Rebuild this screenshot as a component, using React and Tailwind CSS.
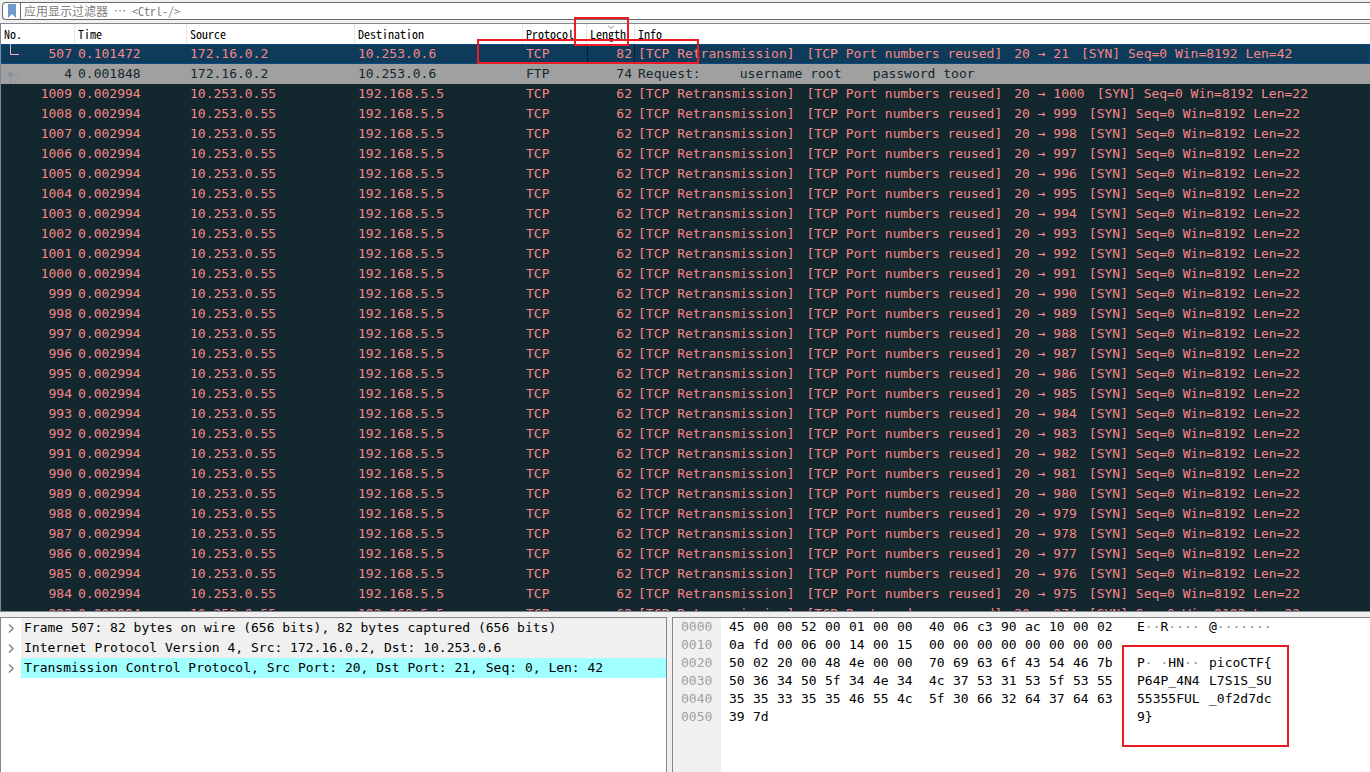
import React from 'react';

const RETRANSMIT = ['[TCP Retransmission]', '[TCP Port numbers reused]'];

const packets = [
    {
        no: 507,
        time: '0.101472',
        source: '172.16.0.2',
        destination: '10.253.0.6',
        protocol: 'TCP',
        length: 82,
        info: [...RETRANSMIT, '20 → 21', '[SYN] Seq=0 Win=8192 Len=42'],
        kind: 'selected',
    },
    {
        no: 4,
        time: '0.001848',
        source: '172.16.0.2',
        destination: '10.253.0.6',
        protocol: 'FTP',
        length: 74,
        info: ['Request:     username root    password toor'],
        kind: 'related',
    },
    // SYN scan, one packet per destination port, newest first
    ...Array.from({ length: 27 }, (_, i) => ({
        no: 1009 - i,
        time: '0.002994',
        source: '10.253.0.55',
        destination: '192.168.5.5',
        protocol: 'TCP',
        length: 62,
        info: [...RETRANSMIT, `20 → ${1000 - i}`, '[SYN] Seq=0 Win=8192 Len=22'],
        kind: 'bad',
    })),
];

const rowStyles = {
    selected: 'bg-[#0f3b5b] text-[#f78787] outline outline-1 -outline-offset-1 outline-[#0b4a80]',
    related: 'bg-[#a0a0a0] text-[#12272e]',
    bad: 'bg-[#12272e] text-[#f78787]',
};

const columns = [
    { label: 'No.', width: 'w-[74px]' },
    { label: 'Time', width: 'w-28' },
    { label: 'Source', width: 'w-42' },
    { label: 'Destination', width: 'w-42' },
    { label: 'Protocol', width: 'w-16' },
    { label: 'Length', width: 'w-12', sorted: true },
    { label: 'Info', width: 'w-auto' },
];

const details = [
    { text: 'Frame 507: 82 bytes on wire (656 bits), 82 bytes captured (656 bits)' },
    { text: 'Internet Protocol Version 4, Src: 172.16.0.2, Dst: 10.253.0.6' },
    { text: 'Transmission Control Protocol, Src Port: 20, Dst Port: 21, Seq: 0, Len: 42', active: true },
];

const dump = [
    { offset: '0000', hex: '45 00 00 52 00 01 00 00 40 06 c3 90 ac 10 00 02', ascii: ['E··R····', '@·······'] },
    { offset: '0010', hex: '0a fd 00 06 00 14 00 15 00 00 00 00 00 00 00 00', ascii: ['', ''] },
    { offset: '0020', hex: '50 02 20 00 48 4e 00 00 70 69 63 6f 43 54 46 7b', ascii: ['P· ·HN··', 'picoCTF{'] },
    { offset: '0030', hex: '50 36 34 50 5f 34 4e 34 4c 37 53 31 53 5f 53 55', ascii: ['P64P_4N4', 'L7S1S_SU'] },
    { offset: '0040', hex: '35 35 33 35 35 46 55 4c 5f 30 66 32 64 37 64 63', ascii: ['55355FUL', '_0f2d7dc'] },
    { offset: '0050', hex: '39 7d', ascii: ['9}', ''] },
];

function FilterBar() {
    return (
        <div className="pt-0.5 pl-0.5">
            <div className="flex h-[18px] overflow-hidden rounded-l-sm border border-r-0 border-[#6b6b6b] bg-white">
                <button aria-label="书签" className="flex w-[18px] shrink-0 items-center justify-center border-r border-[#6b6b6b]">
                    <svg width="8" height="14" viewBox="0 0 8 14">
                        <path d="M0 0h8v14l-4-4-4 4z" fill="#6f9bd1" />
                    </svg>
                </button>
                <input
                    aria-label="应用显示过滤器"
                    placeholder="应用显示过滤器 … <Ctrl-/>"
                    className="min-w-0 flex-1 pl-[3px] font-['Noto_Sans_Mono_CJK_SC','Noto_Sans_CJK_SC',monospace] text-xs leading-4 text-black outline-none placeholder:text-[#808080]"
                />
            </div>
        </div>
    );
}

function FlowMark({ kind }) {
    if (kind === 'selected') {
        return (
            <svg className="absolute top-0 left-0" width="20" height="20" viewBox="0 0 20 20" fill="none">
                <path d="M9.5 0v10.5H18" stroke="#f7b0b0" />
            </svg>
        );
    }
    if (kind === 'related') {
        return (
            <svg className="absolute top-0 left-0" width="20" height="20" viewBox="0 0 20 20" fill="none">
                <path d="M9.5 20V10.5H18" stroke="#84939c" />
                <circle cx="9.5" cy="10.5" r="2.5" fill="#84939c" />
            </svg>
        );
    }
    return null;
}

function PacketRow({ packet }) {
    return (
        <tr className={`h-5 ${rowStyles[packet.kind]}`}>
            <td className="relative pr-[3px] text-right">
                <FlowMark kind={packet.kind} />
                {packet.no}
            </td>
            <td className="pl-[3px]">{packet.time}</td>
            <td className="pl-[3px]">{packet.source}</td>
            <td className="pl-[3px]">{packet.destination}</td>
            <td className="pl-[3px]">{packet.protocol}</td>
            <td className={`pr-[3px] text-right ${packet.kind === 'selected' ? 'outline-1 -outline-offset-1 outline-dotted outline-black' : ''}`}>
                {packet.length}
            </td>
            <td className="pl-[3px]">
                <div className="flex gap-3">
                    {packet.info.map(part => <span key={part}>{part}</span>)}
                </div>
            </td>
        </tr>
    );
}

function PacketList() {
    return (
        <div className="min-h-0 grow-[587] basis-0 overflow-hidden border border-r-0 border-[#828790] bg-white">
            <table className="w-full table-fixed border-separate border-spacing-0 text-[13px] leading-5 whitespace-pre">
                <thead>
                    <tr className="h-5 font-['Noto_Sans_Mono_CJK_SC','Liberation_Mono',monospace] text-xs leading-5 text-black">
                        {columns.map(col => (
                            <th key={col.label} className={`relative border-r border-[#e5e5e5] pl-[3px] text-left font-normal last:border-r-0 ${col.width}`}>
                                {col.sorted && (
                                    <svg className="absolute top-px left-1/2 -translate-x-1/2" width="7" height="5" viewBox="0 0 7 5" fill="none">
                                        <path d="M0.5 0.5l3 3 3-3" stroke="#8a8a8a" />
                                    </svg>
                                )}
                                {col.label}
                            </th>
                        ))}
                    </tr>
                </thead>
                <tbody>
                    {packets.map(packet => (
                        <PacketRow key={packet.no} packet={packet} />
                    ))}
                </tbody>
            </table>
        </div>
    );
}

function PacketDetails() {
    return (
        <div className="min-w-0 grow-[665] basis-0 overflow-hidden border border-b-0 border-[#828790] bg-white">
            <ul className="text-[13px] leading-5 whitespace-pre">
                {details.map(item => (
                    <li key={item.text} className="flex h-5">
                        <button aria-label="展开" className="flex w-5 shrink-0 items-center justify-center">
                            <svg width="6" height="9" viewBox="0 0 6 9" fill="none">
                                <path d="M1 0.5l4 4-4 4" stroke="#808080" strokeWidth="1.4" />
                            </svg>
                        </button>
                        <span className={`flex-1 pl-[3px] ${item.active ? 'bg-[#a0ffff]' : 'bg-[#f0f0f0]'}`}>{item.text}</span>
                    </li>
                ))}
            </ul>
        </div>
    );
}

function Ascii({ text }) {
    return text.split(/(·+)/).map((part, i) => (
        <span key={i} className={part.startsWith('·') ? 'text-[#909090]' : ''}>{part}</span>
    ));
}

function HexRow({ line }) {
    const bytes = line.hex.split(' ');
    return (
        <tr className="h-[18px]">
            <th className="w-14 pl-2 text-left font-normal text-[#a0a0a0]">{line.offset}</th>
            {Array.from({ length: 16 }, (_, i) => (
                <td key={i} className={i === 7 || i === 15 ? 'w-8' : 'w-6'}>{bytes[i]}</td>
            ))}
            <td className="w-20 pl-2"><Ascii text={line.ascii[0]} /></td>
            <td className="w-16"><Ascii text={line.ascii[1]} /></td>
        </tr>
    );
}

function PacketBytes() {
    return (
        <div className="relative flex min-w-0 grow-[697] basis-0 border-t border-l border-[#828790] bg-white">
            <div className="absolute inset-y-0 left-0 w-12 bg-[#f0f0f0]" />
            <table className="relative w-[600px] table-fixed self-start border-separate border-spacing-0 text-[13px] leading-[18px] whitespace-pre">
                <tbody>
                    {dump.map(line => (
                        <HexRow key={line.offset} line={line} />
                    ))}
                </tbody>
            </table>
            <div className="absolute top-[27px] left-[449px] h-[102px] w-[167px] border-2 border-[#ed1c24]" />
        </div>
    );
}

export default function App() {
    return (
        <div className="relative flex h-screen flex-col overflow-hidden bg-[#f0f0f0] font-['DejaVu_Sans_Mono','Liberation_Mono',monospace] text-black">
            <FilterBar />
            <div className="flex min-h-0 flex-1 flex-col gap-[5px] pt-[3px]">
                <PacketList />
                <div className="flex min-h-0 grow-[155] basis-0 gap-[5px]">
                    <PacketDetails />
                    <PacketBytes />
                </div>
            </div>

            {/* Highlight boxes */}
            <div className="absolute top-[17px] left-[574px] h-[29px] w-[55px] border-2 border-[#ed1c24]" />
            <div className="absolute top-[39px] left-[477px] h-[25px] w-[222px] border-2 border-[#ed1c24]" />
        </div>
    );
}
